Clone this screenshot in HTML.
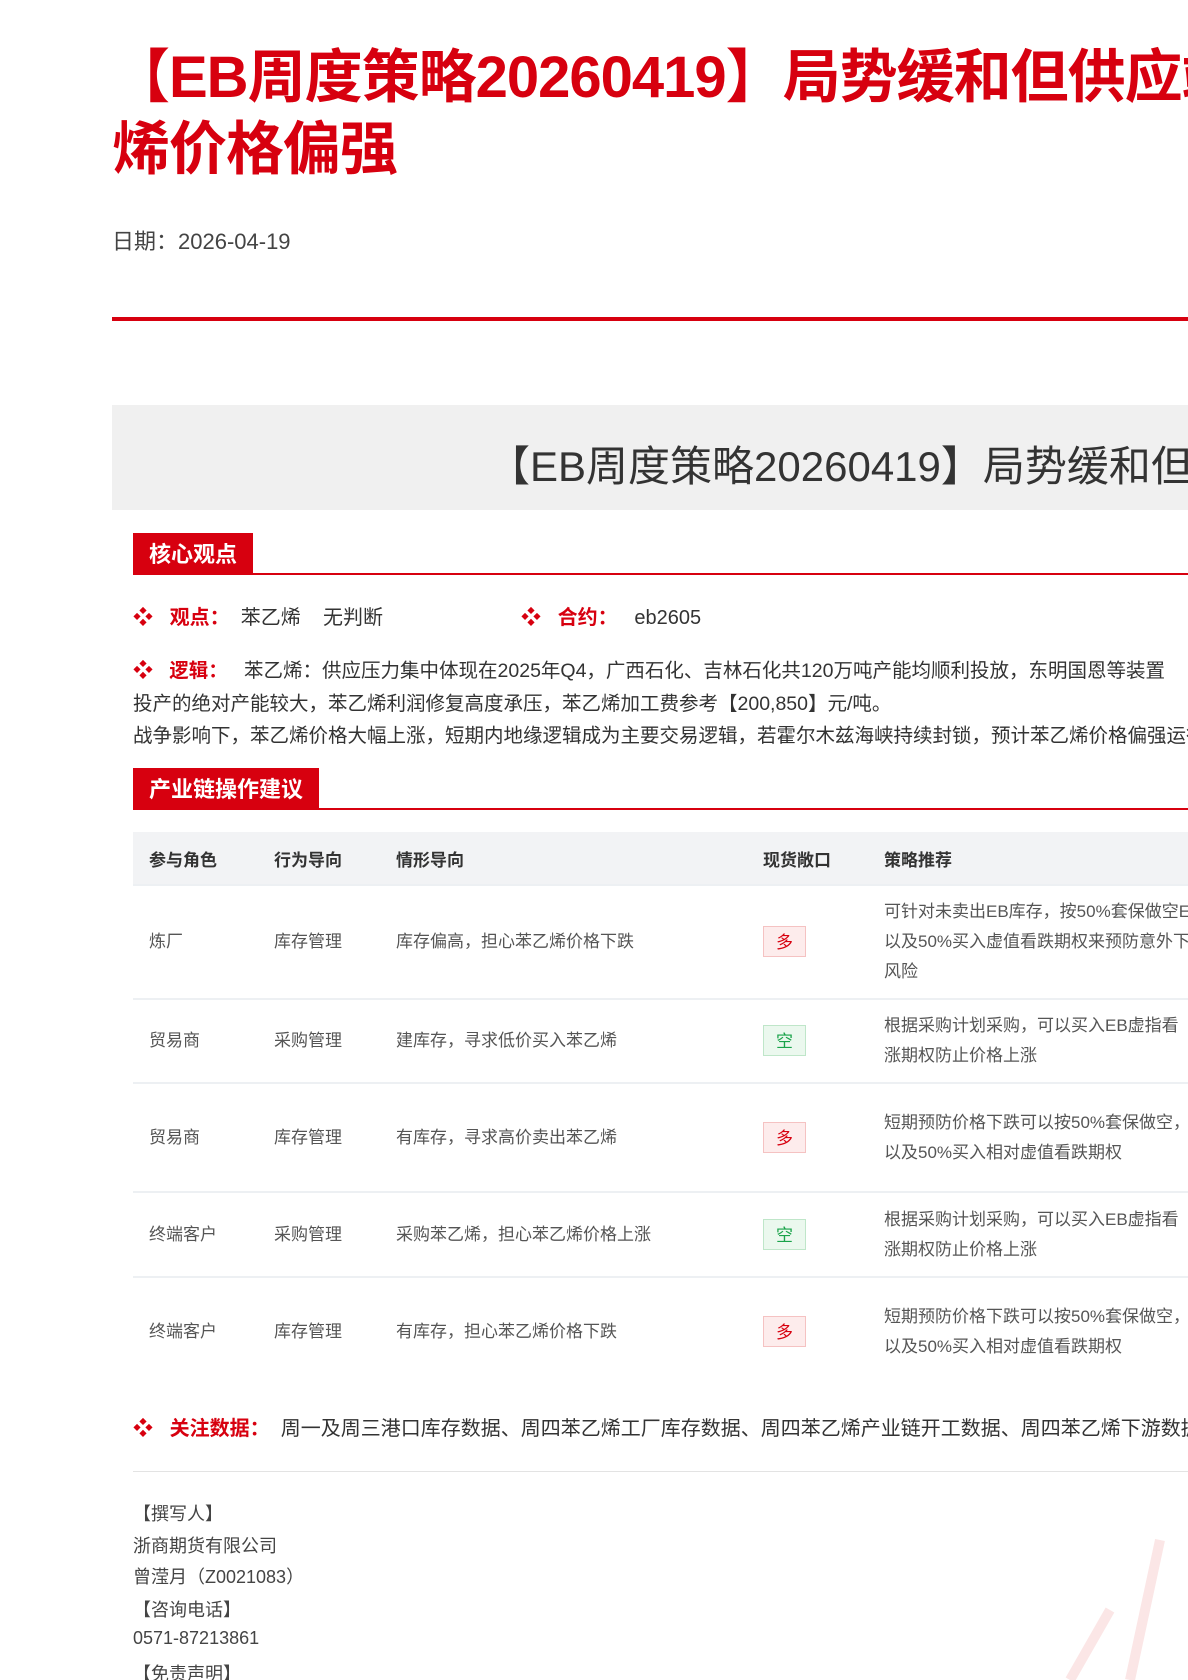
<!DOCTYPE html>
<html><head><meta charset="utf-8">
<style>
html,body{margin:0;padding:0;background:#fff;width:1188px;height:1680px;overflow:hidden;position:relative;font-family:"Liberation Sans","Noto Sans CJK SC",sans-serif;color:#333}
.a{position:absolute;white-space:nowrap}
.title{left:112px;top:42px;font-size:58px;font-weight:bold;color:#d7000f;line-height:72px;letter-spacing:-1px}
.date{left:112px;top:224px;font-size:22px;color:#444}
.redline{left:112px;top:317px;width:1200px;height:4px;background:#d7000f}
.gray{left:112px;top:405px;width:1200px;height:105px;background:#f0f0f0}
.gray span{position:absolute;left:376px;top:28px;font-size:42px;color:#333}
.tab{background:#d7000f;color:#fff;font-size:22px;font-weight:bold;height:41px;line-height:43px;padding:0 16px}
.uline{height:2px;background:#d7000f;width:1200px}
.row{font-size:20px;color:#333}
.d{color:#d7000f;font-size:20px}
.lab{color:#d7000f;font-weight:bold}
table{position:absolute;left:133px;top:832px;border-collapse:collapse;font-size:17px;color:#555;table-layout:fixed;width:1300px}
th{background:#f2f3f5;text-align:left;font-weight:bold;color:#333;height:52px;padding:0 0 0 16px;font-size:17px}
td{padding:0 0 0 16px;border-top:2px solid #edf0f3;vertical-align:middle;line-height:30px;white-space:nowrap}
.b{display:inline-block;width:43px;height:31px;line-height:31px;text-align:center;font-size:17px;box-sizing:border-box}
.r{color:#d7000f;background:#fdecec;border:1px solid #f5c2c2}
.g{color:#1aa34a;background:#ebf8ee;border:1px solid #bfe6c9}
.foot{left:133px;font-size:18px;color:#444}
</style></head><body>
<div class="a title">【EB周度策略20260419】局势缓和但供应端扰动仍存，苯乙<br>烯价格偏强</div>
<div class="a date">日期：2026-04-19</div>
<div class="a redline"></div>
<div class="a gray"><span>【EB周度策略20260419】局势缓和但供应端扰动仍存，苯乙烯价格偏强</span></div>

<div class="a tab" style="left:133px;top:533px">核心观点</div>
<div class="a uline" style="left:133px;top:573px"></div>
<div class="a row" style="left:133px;top:601px"><span class="d">❖</span>&nbsp;&nbsp;&nbsp;<span class="lab">观点：</span>&nbsp;&nbsp;苯乙烯&nbsp;&nbsp;&nbsp;&nbsp;无判断</div>
<div class="a row" style="left:521px;top:601px"><span class="d">❖</span>&nbsp;&nbsp;&nbsp;<span class="lab">合约：</span>&nbsp;&nbsp;&nbsp;eb2605</div>
<div class="a row" style="left:133px;top:654px;font-size:19.5px"><span class="d">❖</span>&nbsp;&nbsp;&nbsp;<span class="lab">逻辑：</span>&nbsp;&nbsp;&nbsp;苯乙烯：供应压力集中体现在2025年Q4，广西石化、吉林石化共120万吨产能均顺利投放，东明国恩等装置</div>
<div class="a row" style="left:133px;top:687px;font-size:19.5px">投产的绝对产能较大，苯乙烯利润修复高度承压，苯乙烯加工费参考【200,850】元/吨。</div>
<div class="a row" style="left:133px;top:719px;font-size:19.5px">战争影响下，苯乙烯价格大幅上涨，短期内地缘逻辑成为主要交易逻辑，若霍尔木兹海峡持续封锁，预计苯乙烯价格偏强运行。</div>

<div class="a tab" style="left:133px;top:768px">产业链操作建议</div>
<div class="a uline" style="left:133px;top:808px"></div>

<table>
<colgroup><col style="width:125px"><col style="width:122px"><col style="width:367px"><col style="width:121px"><col style="width:565px"></colgroup>
<tr><th>参与角色</th><th>行为导向</th><th>情形导向</th><th>现货敞口</th><th>策略推荐</th></tr>
<tr style="height:114px"><td>炼厂</td><td>库存管理</td><td>库存偏高，担心苯乙烯价格下跌</td><td><span class="b r">多</span></td><td>可针对未卖出EB库存，按50%套保做空EB期货，<br>以及50%买入虚值看跌期权来预防意外下跌<br>风险</td></tr>
<tr style="height:84px"><td>贸易商</td><td>采购管理</td><td>建库存，寻求低价买入苯乙烯</td><td><span class="b g">空</span></td><td>根据采购计划采购，可以买入EB虚指看<br>涨期权防止价格上涨</td></tr>
<tr style="height:109px"><td>贸易商</td><td>库存管理</td><td>有库存，寻求高价卖出苯乙烯</td><td><span class="b r">多</span></td><td>短期预防价格下跌可以按50%套保做空，<br>以及50%买入相对虚值看跌期权</td></tr>
<tr style="height:85px"><td>终端客户</td><td>采购管理</td><td>采购苯乙烯，担心苯乙烯价格上涨</td><td><span class="b g">空</span></td><td>根据采购计划采购，可以买入EB虚指看<br>涨期权防止价格上涨</td></tr>
<tr style="height:108px"><td>终端客户</td><td>库存管理</td><td>有库存，担心苯乙烯价格下跌</td><td><span class="b r">多</span></td><td>短期预防价格下跌可以按50%套保做空，<br>以及50%买入相对虚值看跌期权</td></tr>
</table>

<div class="a row" style="left:133px;top:1412px"><span class="d">❖</span>&nbsp;&nbsp;&nbsp;<span class="lab">关注数据：</span>&nbsp;&nbsp;周一及周三港口库存数据、周四苯乙烯工厂库存数据、周四苯乙烯产业链开工数据、周四苯乙烯下游数据</div>
<div class="a" style="left:133px;top:1471px;width:1200px;height:1px;background:#e3e3e3"></div>

<div class="a foot" style="top:1500px">【撰写人】</div>
<div class="a foot" style="top:1532px">浙商期货有限公司</div>
<div class="a foot" style="top:1563px">曾滢月（Z0021083）</div>
<div class="a foot" style="top:1596px">【咨询电话】</div>
<div class="a foot" style="top:1628px">0571-87213861</div>
<div class="a foot" style="top:1660px">【免责声明】</div>
<svg class="a" style="left:960px;top:1520px" width="228" height="160"><path d="M200 20 L170 160 M150 90 L110 160" stroke="#fbe6e6" stroke-width="10" fill="none"/></svg>
</body></html>
